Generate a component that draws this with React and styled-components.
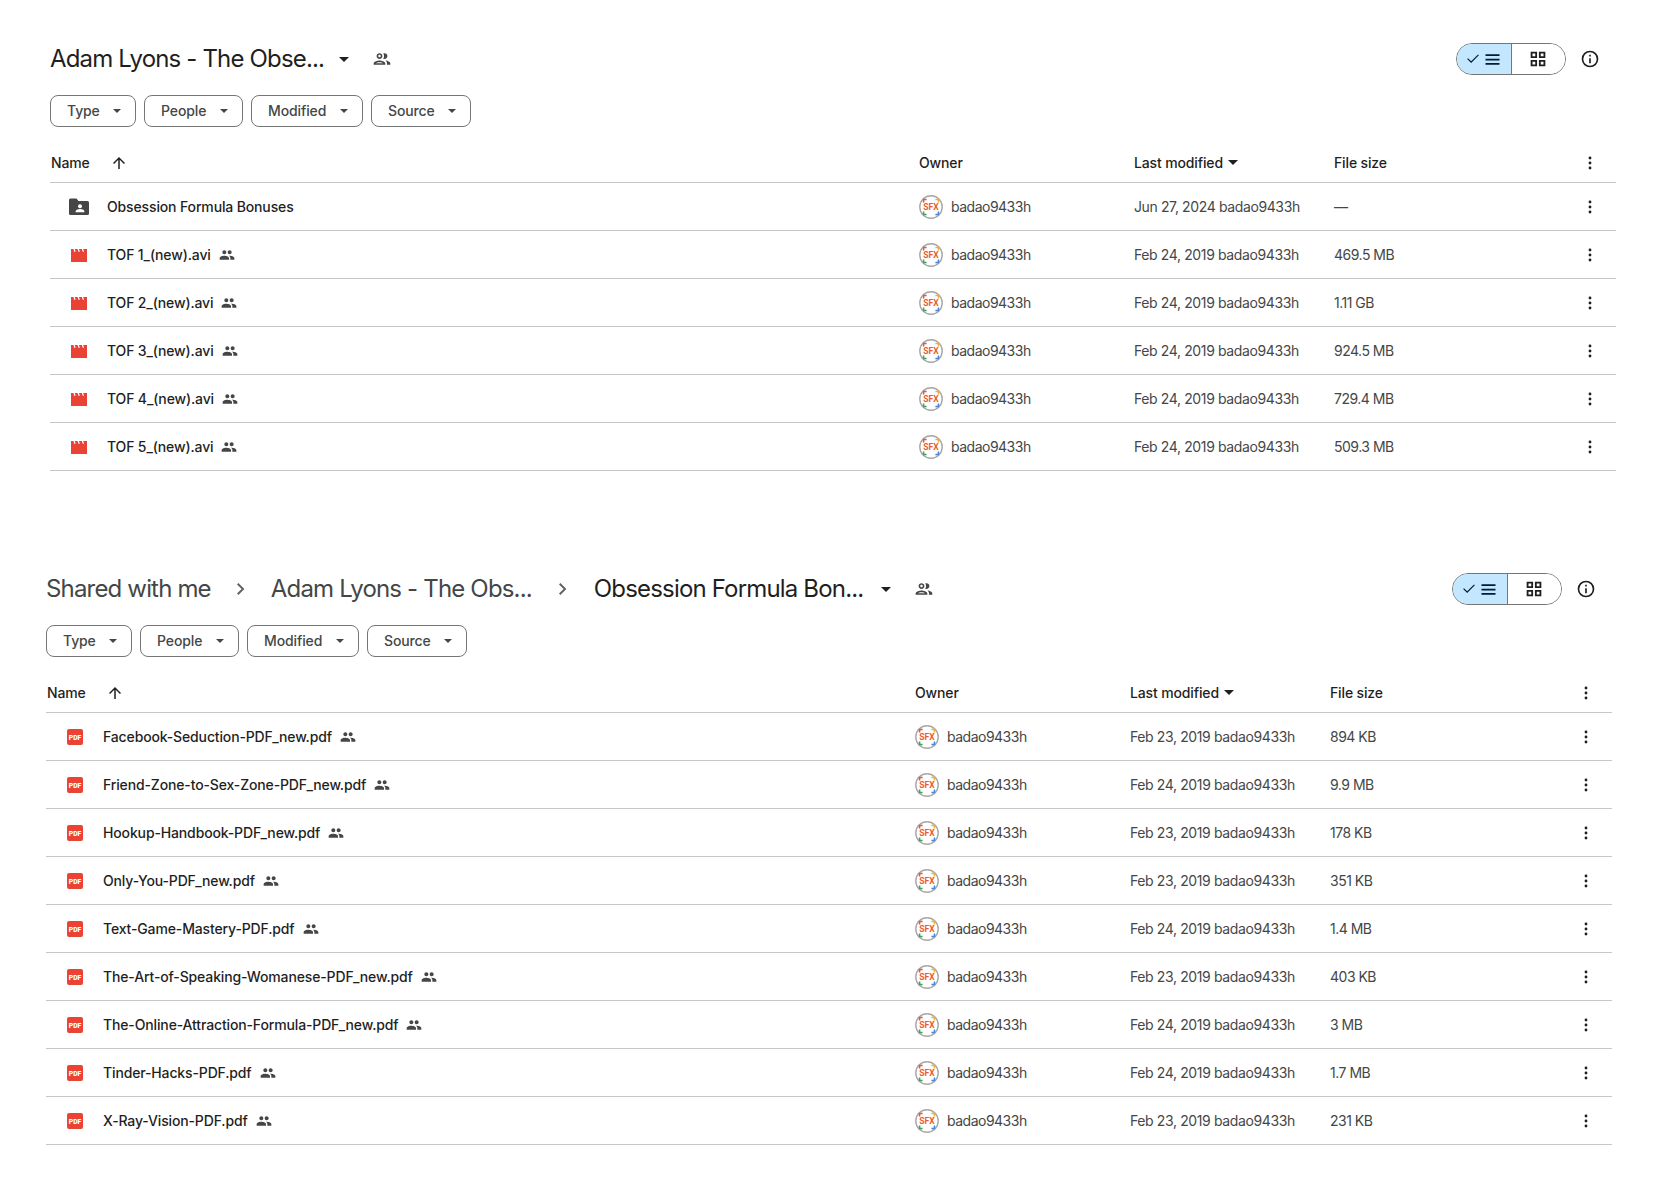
import React from "react";
import styled, { createGlobalStyle } from "styled-components";

const GlobalStyle = createGlobalStyle`
  html, body { margin: 0; padding: 0; background: #fff; }
  body { font-family: Inter, Roboto, Arial, sans-serif; color: #1f1f1f; }
`;

const Page = styled.div`
  width: 1672px;
  height: 1194px;
  overflow: hidden;
  padding-top: 36px;
  box-sizing: border-box;
`;
const Panel = styled.section`
  margin-left: ${props => props.$left}px;
  width: 1566px;
  margin-bottom: ${props => props.$bottom || 0}px;
`;
const TitleBar = styled.div`
  display: flex;
  align-items: center;
  height: 46px;
`;
const Crumb = styled.span`
  font-size: 24px;
  line-height: 32px;
  color: ${props => (props.$current ? "#1f1f1f" : "#444746")};
  letter-spacing: -0.83px;
  white-space: nowrap;
`;
const Chevron = styled.svg`
  width: 24px;
  height: 24px;
  margin: 0 ${props => props.$gap}px;
  fill: #5f6368;
`;
const TitleCaret = styled.span`
  width: 0;
  height: 0;
  border-left: 5px solid transparent;
  border-right: 5px solid transparent;
  border-top: 5px solid #1f1f1f;
  margin-left: ${props => props.$gap}px;
`;
const TitleShare = styled.svg`
  width: 20px;
  height: 20px;
  margin-left: 23px;
  fill: #444746;
`;
const TitleTools = styled.div`
  display: flex;
  align-items: center;
  margin-left: auto;
  padding-right: 16px;
`;
const Toggle = styled.div`
  display: flex;
  width: 110px;
  height: 32px;
  box-sizing: border-box;
  border: 1px solid #747775;
  border-radius: 16px;
  overflow: hidden;
`;
const ToggleHalf = styled.div`
  flex: 1;
  display: flex;
  align-items: center;
  justify-content: center;
  gap: 0;
  background: ${props => (props.$active ? "#c2e7ff" : "#fff")};
  border-right: ${props => (props.$active ? "1px solid #747775" : "none")};
`;
const InfoIcon = styled.svg`
  width: 20px;
  height: 20px;
  margin-left: 14px;
  fill: #1f1f1f;
`;
const Chips = styled.div`
  display: flex;
  gap: 8px;
  margin-top: 13px;
`;
const Chip = styled.div`
  display: flex;
  align-items: center;
  justify-content: space-between;
  width: ${props => props.$width}px;
  height: 32px;
  box-sizing: border-box;
  padding: 0 14px 1px 16px;
  border: 1px solid #747775;
  border-radius: 8px;
  font-size: 14px;
  font-weight: 500;
  letter-spacing: -0.12px;
  color: #444746;
`;
const ChipCaret = styled.span`
  width: 0;
  height: 0;
  border-left: 4px solid transparent;
  border-right: 4px solid transparent;
  border-top: 4px solid #444746;
`;
const Table = styled.div`
  margin-top: 19px;
`;
const Row = styled.div`
  display: grid;
  grid-template-columns: 869px 215px 200px 1fr 52px;
  align-items: center;
  height: ${props => (props.$head ? 37 : 48)}px;
  box-sizing: border-box;
  padding-bottom: ${props => (props.$head ? 3 : 0)}px;
  border-bottom: 1px solid #c7c7c7;
  font-size: 14px;
  letter-spacing: -0.14px;
`;
const HeadCell = styled.div`
  display: flex;
  align-items: center;
  font-weight: 500;
  color: #1f1f1f;
  padding-left: ${props => (props.$first ? 1 : 0)}px;
`;
const SortArrow = styled.svg`
  width: 18px;
  height: 18px;
  margin-left: 20px;
  fill: #1f1f1f;
`;
const HeadCaret = styled.span`
  width: 0;
  height: 0;
  border-left: 5px solid transparent;
  border-right: 5px solid transparent;
  border-top: 5px solid #1f1f1f;
  margin-left: 5px;
`;
const NameCell = styled.div`
  display: flex;
  align-items: center;
  padding-left: 17px;
  font-weight: 500;
  color: #1f1f1f;
`;
const FileIcon = styled.svg`
  width: 24px;
  height: 24px;
  margin-right: 16px;
  flex: none;
`;
const SharedIcon = styled.svg`
  width: 16px;
  height: 16px;
  margin-left: 8px;
  fill: #444746;
`;
const OwnerCell = styled.div`
  display: flex;
  align-items: center;
  gap: 8px;
  color: #444746;
  letter-spacing: -0.5px;
`;
const Muted = styled.div`
  color: #444746;
  white-space: nowrap;
  letter-spacing: ${props => props.$spacing}px;
`;
const Dots = styled.svg`
  width: 20px;
  height: 20px;
  justify-self: center;
  fill: #1f1f1f;
`;

const GROUP = "M16 11c1.66 0 2.99-1.34 2.99-3S17.66 5 16 5c-1.66 0-3 1.34-3 3s1.34 3 3 3zm-8 0c1.66 0 2.99-1.34 2.99-3S9.66 5 8 5C6.34 5 5 6.34 5 8s1.34 3 3 3zm0 2c-2.33 0-7 1.17-7 3.5V19h14v-2.5c0-2.33-4.67-3.5-7-3.5zm8 0c-.29 0-.62.02-.97.05 1.16.84 1.97 1.97 1.97 3.45V19h6v-2.5c0-2.33-4.67-3.5-7-3.5z";
const GROUP_OUTLINE = "M9 13.75c-2.34 0-7 1.17-7 3.5V19h14v-1.75c0-2.33-4.66-3.5-7-3.5zM4.34 17c.84-.58 2.87-1.25 4.66-1.25s3.82.67 4.66 1.25H4.34zM9 12c1.93 0 3.5-1.57 3.5-3.5S10.93 5 9 5 5.5 6.57 5.5 8.5 7.07 12 9 12zm0-5c.83 0 1.5.67 1.5 1.5S9.83 10 9 10s-1.5-.67-1.5-1.5S8.17 7 9 7zm7.04 6.81c1.16.84 1.96 1.96 1.96 3.44V19h4v-1.75c0-2.02-3.5-3.17-5.96-3.44zM15 12c1.93 0 3.5-1.57 3.5-3.5S16.93 5 15 5c-.54 0-1.04.13-1.5.35.63.89 1 1.98 1 3.15s-.37 2.26-1 3.15c.46.22.96.35 1.5.35z";
const CHEVRON = "M9.4 18 8 16.6l4.6-4.6L8 7.4 9.4 6l6 6z";

function Avatar() {
  return (
    <svg width="24" height="24" viewBox="0 0 24 24">
      <circle cx="12" cy="12" r="11.2" fill="#fff" stroke="#a8a8a8" strokeWidth="1.4" />
      <path d="M4.6 7.6V4.6h3" fill="none" stroke="#e0564a" strokeWidth="1.5" />
      <path d="M16.4 4.6h3v3" fill="none" stroke="#f2b134" strokeWidth="1.5" />
      <path d="M4.6 16.4v3h3" fill="none" stroke="#4c9f5a" strokeWidth="1.5" />
      <path d="M16.4 19.4h3v-3" fill="none" stroke="#4a86d8" strokeWidth="1.5" />
      <text x="12" y="15" textAnchor="middle" fontSize="8.6" fontWeight="700" letterSpacing="0" fontFamily="Roboto, sans-serif" fill="#ef5a2a">SFX</text>
    </svg>
  );
}

function FolderIcon() {
  return (
    <FileIcon viewBox="0 0 24 24">
      <path fill="#444746" d="M2 5a1.5 1.5 0 0 1 1.5-1.5h6l2 2.5h9A1.5 1.5 0 0 1 22 7.5v11a1.5 1.5 0 0 1-1.5 1.5h-17A1.5 1.5 0 0 1 2 18.5z" />
      <circle cx="13" cy="11.3" r="2" fill="#fff" />
      <path fill="#fff" d="M8.7 17.2v-1c0-1.5 2.9-2.2 4.3-2.2s4.3.7 4.3 2.2v1z" />
    </FileIcon>
  );
}

function VideoIcon() {
  return (
    <FileIcon viewBox="0 0 24 24">
      <path fill="#ea4335" d="M4 6h16v13H4z" />
      <path fill="none" stroke="#fff" strokeWidth="1.2" d="M6.8 5.5l1.3 3.2M11 5.5l1.3 3.2M15.2 5.5l1.3 3.2" />
    </FileIcon>
  );
}

function PdfIcon() {
  return (
    <FileIcon viewBox="0 0 24 24">
      <rect x="4" y="4" width="16" height="16" rx="2" fill="#ea4335" />
      <text x="12" y="14.6" textAnchor="middle" fontSize="6.8" fontWeight="900" letterSpacing="0" fontFamily="Roboto, sans-serif" fill="#fff">PDF</text>
    </FileIcon>
  );
}

function MoreDots() {
  return (
    <Dots viewBox="0 0 24 24">
      <circle cx="12" cy="6" r="1.7" />
      <circle cx="12" cy="12" r="1.7" />
      <circle cx="12" cy="18" r="1.7" />
    </Dots>
  );
}

const FILTERS = [
  { label: "Type", width: 86 },
  { label: "People", width: 99 },
  { label: "Modified", width: 112 },
  { label: "Source", width: 100 },
];

const TOP_ROWS = [
  { name: "Obsession Formula Bonuses", kind: "folder", date: "Jun 27, 2024", size: "—" },
  { name: "TOF 1_(new).avi", kind: "video", date: "Feb 24, 2019", size: "469.5 MB" },
  { name: "TOF 2_(new).avi", kind: "video", date: "Feb 24, 2019", size: "1.11 GB" },
  { name: "TOF 3_(new).avi", kind: "video", date: "Feb 24, 2019", size: "924.5 MB" },
  { name: "TOF 4_(new).avi", kind: "video", date: "Feb 24, 2019", size: "729.4 MB" },
  { name: "TOF 5_(new).avi", kind: "video", date: "Feb 24, 2019", size: "509.3 MB" },
];

const BOTTOM_ROWS = [
  { name: "Facebook-Seduction-PDF_new.pdf", date: "Feb 23, 2019", size: "894 KB" },
  { name: "Friend-Zone-to-Sex-Zone-PDF_new.pdf", date: "Feb 24, 2019", size: "9.9 MB" },
  { name: "Hookup-Handbook-PDF_new.pdf", date: "Feb 23, 2019", size: "178 KB" },
  { name: "Only-You-PDF_new.pdf", date: "Feb 23, 2019", size: "351 KB" },
  { name: "Text-Game-Mastery-PDF.pdf", date: "Feb 24, 2019", size: "1.4 MB" },
  { name: "The-Art-of-Speaking-Womanese-PDF_new.pdf", date: "Feb 23, 2019", size: "403 KB" },
  { name: "The-Online-Attraction-Formula-PDF_new.pdf", date: "Feb 24, 2019", size: "3 MB" },
  { name: "Tinder-Hacks-PDF.pdf", date: "Feb 24, 2019", size: "1.7 MB" },
  { name: "X-Ray-Vision-PDF.pdf", date: "Feb 23, 2019", size: "231 KB" },
].map(row => ({ ...row, kind: "pdf" }));

function TitleTail({ caretGap }) {
  return (
    <>
      <TitleCaret $gap={caretGap} />
      <TitleShare viewBox="0 0 24 24"><path d={GROUP_OUTLINE} /></TitleShare>
      <TitleTools>
        <Toggle>
          <ToggleHalf $active>
            <svg width="18" height="18" viewBox="0 0 24 24" fill="#001d35"><path d="M9.55 17.3 4.2 12l1.1-1.1 4.25 4.25 9.15-9.15 1.1 1.1z" /></svg>
            <svg width="21" height="21" viewBox="0 0 24 24" fill="#001d35"><path d="M4 6h16v2H4zm0 5h16v2H4zm0 5h16v2H4z" /></svg>
          </ToggleHalf>
          <ToggleHalf>
            <svg width="22" height="22" viewBox="0 0 24 24" fill="#1f1f1f"><path fillRule="evenodd" d="M4 4h7v7H4zm2 2v3h3V6zm7-2h7v7h-7zm2 2v3h3V6zM4 13h7v7H4zm2 2v3h3v-3zm7-2h7v7h-7zm2 2v3h3v-3z" /></svg>
          </ToggleHalf>
        </Toggle>
        <InfoIcon viewBox="0 0 24 24"><path d="M11 7h2v2h-2zm0 4h2v6h-2zm1-9a10 10 0 1 0 0 20 10 10 0 0 0 0-20zm0 18a8 8 0 1 1 0-16 8 8 0 0 1 0 16z" /></InfoIcon>
      </TitleTools>
    </>
  );
}

function FileTable({ rows }) {
  return (
    <Table>
      <Row $head>
        <HeadCell $first>
          Name
          <SortArrow viewBox="0 0 24 24"><path d="M13 20h-2V7.8l-5.6 5.6L4 12l8-8 8 8-1.4 1.4L13 7.8z" /></SortArrow>
        </HeadCell>
        <HeadCell>Owner</HeadCell>
        <HeadCell>Last modified<HeadCaret /></HeadCell>
        <HeadCell>File size</HeadCell>
        <MoreDots />
      </Row>
      {rows.map(row => (
        <Row key={row.name}>
          <NameCell>
            {row.kind === "folder" && <FolderIcon />}
            {row.kind === "video" && <VideoIcon />}
            {row.kind === "pdf" && <PdfIcon />}
            {row.name}
            {row.kind !== "folder" && <SharedIcon viewBox="0 0 24 24"><path d={GROUP} /></SharedIcon>}
          </NameCell>
          <OwnerCell><Avatar />badao9433h</OwnerCell>
          <Muted $spacing={-0.38}>{row.date} badao9433h</Muted>
          <Muted $spacing={-0.5}>{row.size}</Muted>
          <MoreDots />
        </Row>
      ))}
    </Table>
  );
}

function FilterChips() {
  return (
    <Chips>
      {FILTERS.map(filter => (
        <Chip key={filter.label} $width={filter.width}>
          {filter.label}
          <ChipCaret />
        </Chip>
      ))}
    </Chips>
  );
}

export default function App() {
  return (
    <Page>
      <GlobalStyle />
      <Panel $left={50} $bottom={95}>
        <TitleBar>
          <Crumb $current>Adam Lyons - The Obse...</Crumb>
          <TitleTail caretGap={15} />
        </TitleBar>
        <FilterChips />
        <FileTable rows={TOP_ROWS} />
      </Panel>
      <Panel $left={46}>
        <TitleBar>
          <Crumb>Shared with me</Crumb>
          <Chevron $gap={18} viewBox="0 0 24 24"><path d={CHEVRON} /></Chevron>
          <Crumb>Adam Lyons - The Obs...</Crumb>
          <Chevron $gap={19} viewBox="0 0 24 24"><path d={CHEVRON} /></Chevron>
          <Crumb $current>Obsession Formula Bon...</Crumb>
          <TitleTail caretGap={18} />
        </TitleBar>
        <FilterChips />
        <FileTable rows={BOTTOM_ROWS} />
      </Panel>
    </Page>
  );
}
